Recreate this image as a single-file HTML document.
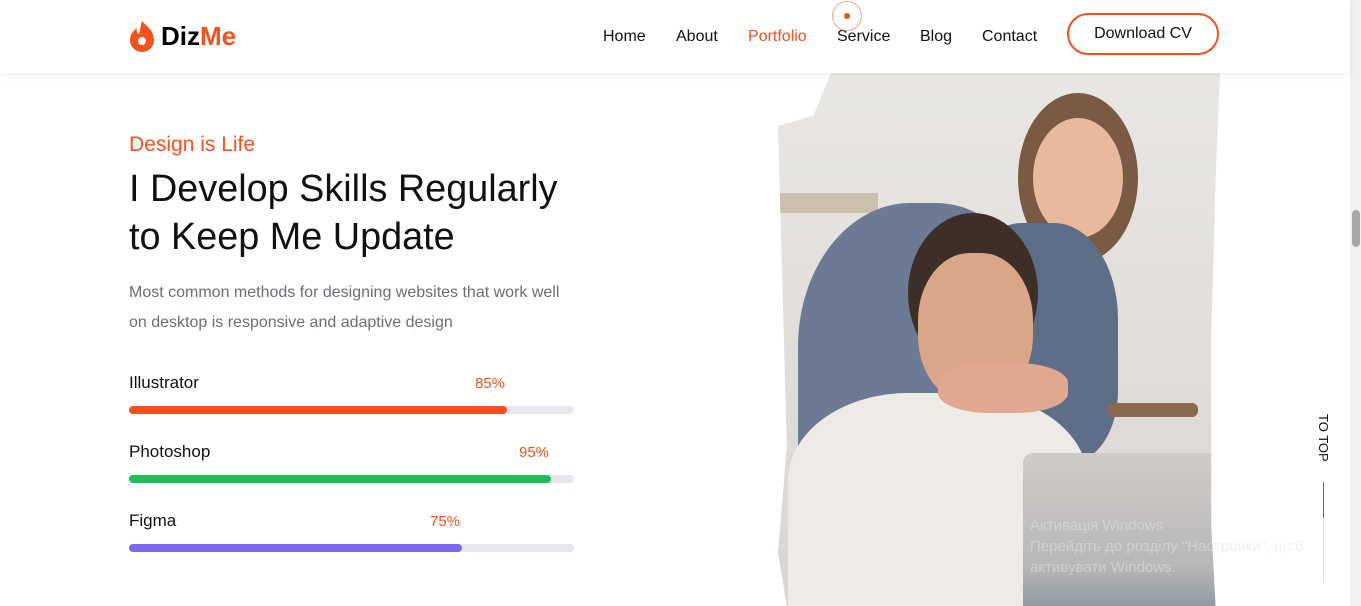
<!DOCTYPE html>
<html><head><meta charset="utf-8"><style>
*{margin:0;padding:0;box-sizing:border-box}
body{width:1361px;height:606px;overflow:hidden;background:#fff;font-family:"Liberation Sans",sans-serif;position:relative}
.hdr{position:absolute;left:0;top:0;width:1350px;height:73px;background:#fff;box-shadow:0 2px 8px rgba(0,0,0,.06);z-index:5}
.logo{position:absolute;left:129px;top:19px;display:flex;align-items:center}
.logo span{font-weight:bold;font-size:26px;margin-left:6px;letter-spacing:0}
.nav{position:absolute;top:28px;font-size:16px;color:#111}
.btn{position:absolute;left:1067px;top:13px;width:152px;height:42px;border:2px solid #f4511e;border-radius:21px;font-size:16px;text-align:center;line-height:38px;color:#111}
.o{color:#f4511e}
.sk{position:absolute;left:129px;width:445px}
.sk .n{font-size:17px;color:#111}
.sk .p{position:absolute;top:2px;font-size:15px;color:#f4511e}
.bar{position:absolute;top:33px;left:0;width:445px;height:8px;background:#e6e6ef;border-radius:4px}
.bar i{display:block;height:8px;border-radius:4px}
.photo{position:absolute;left:778px;top:73px;width:442px;height:533px;overflow:hidden;
clip-path:polygon(12% 0,100% 0,99% 20%,98% 50%,98% 85%,99% 100%,2% 100%,0 90%,2% 70%,1% 40%,0 10%,8% 8%);
background:linear-gradient(180deg,#e9e7e4,#d9d5d0)}
</style></head><body>
<div class="hdr">
<div class="logo"><svg width="26" height="34" viewBox="0 0 26 34"><path d="M13 2c3 4 12 9 12 19a12 12 0 0 1-24 0c0-6 4-10 7-12-1 3 0 5 2 6 1-5 2-9 3-13z" fill="#f4511e"/><circle cx="13" cy="22" r="4" fill="#fff"/></svg><span>Diz<b class="o">Me</b></span></div>
<div class="nav" style="left:603px">Home</div>
<div class="nav" style="left:676px">About</div>
<div class="nav o" style="left:748px">Portfolio</div>
<div class="nav" style="left:837px">Service</div>
<div class="nav" style="left:920px">Blog</div>
<div class="nav" style="left:982px">Contact</div>
<div style="position:absolute;left:832px;top:1px;width:30px;height:30px;border:1.5px solid #f4a08a;border-radius:50%"><div style="position:absolute;left:11px;top:11px;width:6px;height:6px;background:#f4511e;border-radius:50%"></div></div>
<div class="btn">Download CV</div>
</div>
<div style="position:absolute;left:129px;top:133px;font-size:21px;color:#f4511e">Design is Life</div>
<div style="position:absolute;left:129px;top:165px;font-size:37.8px;line-height:48px;color:#111">I Develop Skills Regularly<br>to Keep Me Update</div>
<div style="position:absolute;left:129px;top:278px;font-size:16px;line-height:30px;color:#6b6b80">Most common methods for designing websites that work well<br>on desktop is responsive and adaptive design</div>
<div class="sk" style="top:373px"><div class="n">Illustrator</div><div class="p" style="left:346px">85%</div><div class="bar"><i style="width:378px;background:#f4511e"></i></div></div>
<div class="sk" style="top:442px"><div class="n">Photoshop</div><div class="p" style="left:390px">95%</div><div class="bar"><i style="width:422px;background:#1ebe5a"></i></div></div>
<div class="sk" style="top:511px"><div class="n">Figma</div><div class="p" style="left:301px">75%</div><div class="bar"><i style="width:333px;background:#7b68ee"></i></div></div>
<div class="photo">
<div style="position:absolute;left:0;top:120px;width:100px;height:20px;background:#cdbfae"></div>
<div style="position:absolute;left:20px;top:130px;width:250px;height:320px;border-radius:45% 45% 20% 20%;background:#6c7a93"></div>
<div style="position:absolute;left:240px;top:20px;width:120px;height:170px;border-radius:50%;background:#7b5a44"></div>
<div style="position:absolute;left:255px;top:45px;width:90px;height:120px;border-radius:50%;background:#e8b99c"></div>
<div style="position:absolute;left:180px;top:150px;width:160px;height:240px;border-radius:40% 40% 30% 30%;background:#5f6e88"></div>
<div style="position:absolute;left:130px;top:140px;width:130px;height:160px;border-radius:50%;background:#3d2e28"></div>
<div style="position:absolute;left:140px;top:180px;width:115px;height:150px;border-radius:45%;background:#d9a68a"></div>
<div style="position:absolute;left:10px;top:320px;width:300px;height:220px;border-radius:40% 40% 0 0;background:#eeebe6"></div>
<div style="position:absolute;left:160px;top:290px;width:130px;height:50px;border-radius:40%;background:#e0a890"></div>
<div style="position:absolute;left:330px;top:330px;width:90px;height:14px;border-radius:6px;background:#8a6a4c"></div>
<div style="position:absolute;left:245px;top:380px;width:200px;height:160px;border-radius:10px 0 0 0;background:linear-gradient(180deg,#cfcbc8,#b9b8b8 70%,#8d949e)"></div>
</div>
<div style="position:absolute;left:1030px;top:515px;font-size:15px;line-height:21px;color:rgba(230,230,230,.5)">Активація Windows<br>Перейдіть до розділу "Настройки", щоб<br>активувати Windows.</div>
<div style="position:absolute;left:1316px;top:414px;font-size:13px;color:#111;writing-mode:vertical-rl">TO TOP</div>
<div style="position:absolute;left:1323px;top:482px;width:1px;height:100px;background:#ddd"></div>
<div style="position:absolute;left:1323px;top:482px;width:1px;height:36px;background:#666"></div>
<div style="position:absolute;left:1350px;top:0;width:11px;height:606px;background:#f1f1f1"></div>
<div style="position:absolute;left:1352px;top:210px;width:8px;height:37px;background:#a8a8a8;border-radius:4px"></div>
</body></html>
